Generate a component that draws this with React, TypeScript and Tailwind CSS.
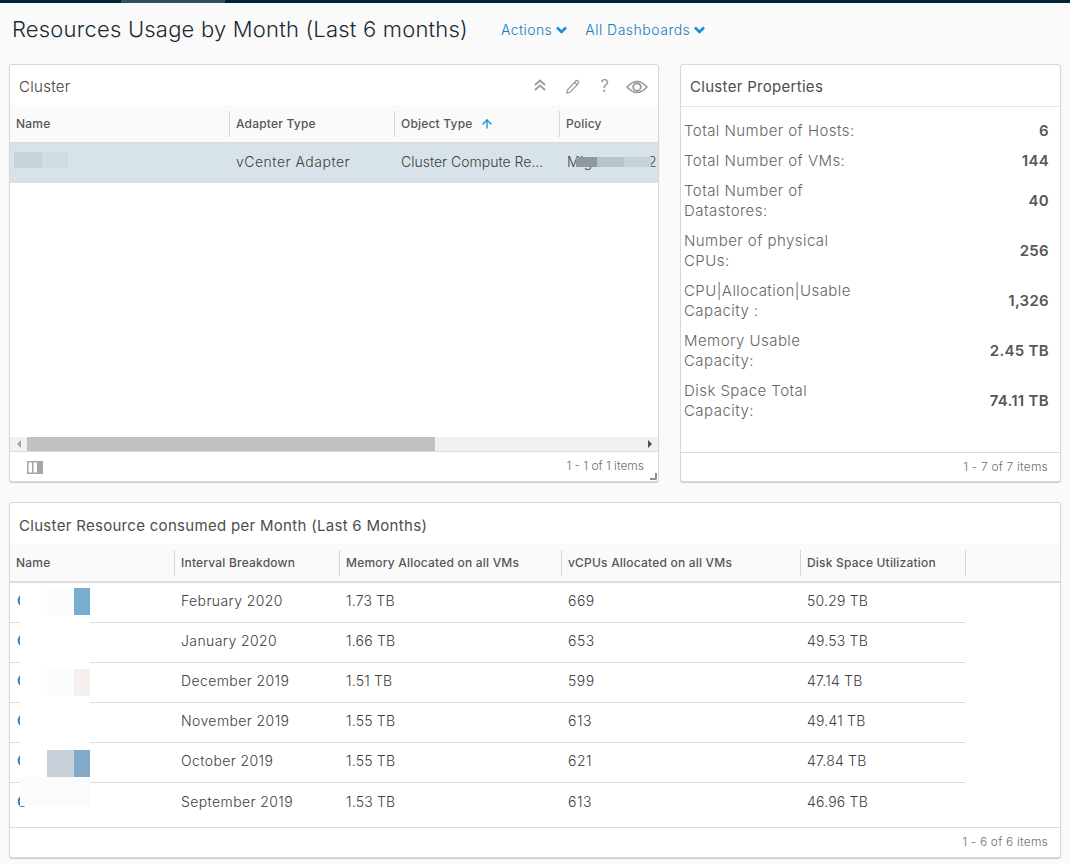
import React from 'react';
import { ArrowUp } from 'lucide-react';

const properties = [
  { label: 'Total Number of Hosts:', value: '6', h: 'h-[30px]' },
  { label: 'Total Number of VMs:', value: '144', h: 'h-[30px]' },
  { label: 'Total Number of Datastores:', value: '40', h: 'h-[50px]' },
  { label: 'Number of physical CPUs:', value: '256', h: 'h-[50px]' },
  { label: 'CPU|Allocation|Usable Capacity :', value: '1,326', h: 'h-[50px]' },
  { label: 'Memory Usable Capacity:', value: '2.45 TB', h: 'h-[50px]' },
  { label: 'Disk Space Total Capacity:', value: '74.11 TB', h: 'h-[50px]' },
];

const months = [
  { month: 'February 2020', mem: '1.73 TB', cpu: '669', disk: '50.29 TB' },
  { month: 'January 2020', mem: '1.66 TB', cpu: '653', disk: '49.53 TB' },
  { month: 'December 2019', mem: '1.51 TB', cpu: '599', disk: '47.14 TB' },
  { month: 'November 2019', mem: '1.55 TB', cpu: '613', disk: '49.41 TB' },
  { month: 'October 2019', mem: '1.55 TB', cpu: '621', disk: '47.84 TB' },
  { month: 'September 2019', mem: '1.53 TB', cpu: '613', disk: '46.96 TB' },
];

function HeadCell({ label, className }: { label: string; className: string }) {
  return (
    <div className={`flex h-[26px] items-center border-r border-[#d7d7d7] pl-[6px] text-[12px] font-medium tracking-[0.2px] text-[#565656] ${className}`}>
      {label}
    </div>
  );
}

function NavChevron() {
  return (
    <svg width="11" height="8" viewBox="0 0 11 8" fill="none" stroke="#1a8fd1" strokeWidth="2.6" className="ml-[4px] mt-[2px]">
      <path d="M1 1.5 L5.5 6 L10 1.5" />
    </svg>
  );
}

export default function App() {
  return (
    <div className='h-[864px] w-[1070px] overflow-hidden bg-[#fafafa] font-["Inter","Liberation_Sans",sans-serif]'>
      {/* Top bar */}
      <div className="flex h-[3px] bg-[#002538]">
        <div className="ml-[121px] w-[104px] bg-[#2f5060]" />
      </div>

      {/* Page title */}
      <div className="flex h-[61px] items-center pb-[9px] pl-[12px]">
        <h1 className="w-[489px] text-[22px] font-light leading-none tracking-[0.2px] text-[#1b2a32]">Resources Usage by Month (Last 6 months)</h1>
        <div className="flex items-center text-[14px] font-light tracking-[0.4px] text-[#0f7fbf]">
          Actions <NavChevron />
        </div>
        <div className="ml-[18px] flex items-center text-[14px] font-light tracking-[0.5px] text-[#0f7fbf]">
          All Dashboards <NavChevron />
        </div>
      </div>

      <div className="ml-[9px] flex w-[1052px] gap-[21px]">
        {/* Cluster card */}
        <div className="relative flex h-[418px] w-[650px] flex-col overflow-hidden rounded-[3px] border border-[#d7d7d7] bg-white shadow-[0_1px_1px_#cfcfcf]">
          <div className="flex h-[40px] flex-none items-center pl-[9px] pr-[10px] pt-[5px]">
            <span className="text-[15px] font-light tracking-[0.3px] text-[#404040]">Cluster</span>
            <div className="ml-auto flex items-center text-[#9a9a9a]">
              <svg width="14" height="14" viewBox="0 0 14 14" fill="none" stroke="currentColor" strokeWidth="1.8" className="mb-[6px]">
                <path d="M2 7 L7 2.5 L12 7" />
                <path d="M2 12 L7 7.5 L12 12" />
              </svg>
              <svg width="16" height="16" viewBox="0 0 16 16" fill="none" stroke="currentColor" strokeWidth="1.3" className="mb-[2px] ml-[18px]">
                <path d="M2 14 L2.8 10.5 L10.5 2.2 Q11.8 1 13 2 Q14.3 3.2 13.2 4.6 L5.5 13 Z" />
                <path d="M9.6 3.4 L12.2 5.8" />
              </svg>
              <span className="mb-[2px] ml-[19px] text-[17px] font-normal leading-none">?</span>
              <svg width="22" height="14" viewBox="0 0 22 14" fill="none" stroke="currentColor" strokeWidth="1.6" className="mb-[2px] ml-[17px]">
                <path d="M1 7 Q11 -4 21 7 Q11 18 1 7 Z" />
                <circle cx="11" cy="7" r="3.8" strokeWidth="1.9" />
              </svg>
            </div>
          </div>

          <div className="flex h-[39px] flex-none items-center border-b-2 border-[#dcdcdc] bg-[#fafafa]">
            <HeadCell label="Name" className="w-[220px]" />
            <HeadCell label="Adapter Type" className="w-[165px]" />
            <div className="flex h-[26px] w-[165px] items-center border-r border-[#d7d7d7] pl-[6px] text-[12px] font-medium tracking-[0.2px] text-[#565656]">
              Object Type
              <ArrowUp size={14} strokeWidth={2.25} className="ml-[7px] text-[#1a8fd1]" />
            </div>
            <div className="pl-[6px] text-[12px] font-medium tracking-[0.2px] text-[#565656]">Policy</div>
          </div>

          <div className="relative flex h-[39px] flex-none items-center bg-[#d8e3e9] pb-[4px] text-[14px] font-light tracking-[0.5px] text-[#404040]">
            <div className="w-[220px]" />
            <div className="w-[165px] pl-[6px]">vCenter Adapter</div>
            <div className="w-[165px] truncate pl-[6px] pr-[4px] tracking-normal">Cluster Compute Re...</div>
            <div className="flex min-w-0 flex-1 justify-between overflow-hidden whitespace-nowrap pl-[7px] pr-[1px]">
              <span>Mig</span>
              <span>2</span>
            </div>
            {/* redacted name */}
            <div className="absolute left-[4px] top-[8px] flex h-[16px]">
              <div className="w-[28px] bg-[#c7d2d9]" />
              <div className="w-[26px] bg-[#d0dce1]" />
            </div>
            {/* redacted policy */}
            <div className="absolute left-[566px] top-[13px] flex h-[10px]">
              <div className="w-[21px] bg-[#8f9a9d]" />
              <div className="w-[27px] bg-[#b9c4c9]" />
              <div className="w-[27px] bg-[#c7d2d8]" />
            </div>
          </div>

          <div className="flex-1" />

          {/* Scrollbar */}
          <div className="flex h-[15px] flex-none items-center border-b border-[#dcdcdc] bg-[#f1f1f1]">
            <div className="flex w-[17px] justify-center">
              <div className="h-0 w-0 border-y-[4px] border-r-[4px] border-y-transparent border-r-[#a3a3a3]" />
            </div>
            <div className="h-[14px] w-[408px] bg-[#c1c1c1]" />
            <div className="ml-auto flex w-[17px] justify-center">
              <div className="h-0 w-0 border-y-[4px] border-l-[4px] border-y-transparent border-l-[#505050]" />
            </div>
          </div>

          {/* Footer */}
          <div className="flex h-[29px] flex-none items-center pl-[17px] pr-[14px]">
            <svg width="16" height="13" viewBox="0 0 16 13" className="mt-[1px]">
              <rect x="0.75" y="0.75" width="14.5" height="11.5" fill="none" stroke="#a6a6a6" strokeWidth="1.5" />
              <rect x="5" y="1" width="1.5" height="11" fill="#a6a6a6" />
              <rect x="10" y="1" width="5" height="11" fill="#a6a6a6" />
            </svg>
            <span className="mb-[1px] ml-auto text-[12px] font-light text-[#6f6f6f]">1 - 1 of 1 items</span>
          </div>

          <div className="absolute bottom-[1px] right-[1px] h-[7px] w-[7px] rounded-br-[2px] border-b-2 border-r-2 border-[#8f8f8f]" />
        </div>

        {/* Properties card */}
        <div className="flex h-[418px] w-[381px] flex-col rounded-[3px] border border-[#d7d7d7] bg-white shadow-[0_1px_1px_#cfcfcf]">
          <div className="flex h-[42px] flex-none items-center border-b border-[#e6e6e6] pl-[9px] pt-[4px] text-[15px] tracking-[0.3px] text-[#4d4d4d]">
            Cluster Properties
          </div>
          <div className="flex-1 pt-[9px]">
            {properties.map((p) => (
              <div key={p.label} className={`flex items-center pl-[3px] pr-[11px] ${p.h}`}>
                <div className="w-[172px] text-[15px] font-light leading-[20px] tracking-[0.45px] text-[#666666]">{p.label}</div>
                <div className="ml-auto text-[15px] font-semibold tracking-[0.3px] text-[#565656]">{p.value}</div>
              </div>
            ))}
          </div>
          <div className="flex h-[29px] flex-none items-center justify-end border-t border-[#dcdcdc] pb-[1px] pr-[12px] text-[12px] font-light tracking-[0.2px] text-[#6f6f6f]">
            1 - 7 of 7 items
          </div>
        </div>
      </div>

      {/* Consumption card */}
      <div className="ml-[9px] mt-[20px] flex h-[356px] w-[1052px] flex-col rounded-[3px] border border-[#d7d7d7] bg-white shadow-[0_1px_1px_#cfcfcf]">
        <div className="flex h-[41px] flex-none items-center pl-[9px] pt-[6px] text-[15px] tracking-[0.3px] text-[#4d4d4d]">
          Cluster Resource consumed per Month (Last 6 Months)
        </div>
        <div className="flex h-[39px] flex-none items-center border-b-2 border-[#dcdcdc] bg-[#fafafa]">
          <HeadCell label="Name" className="w-[165px]" />
          <HeadCell label="Interval Breakdown" className="w-[165px]" />
          <HeadCell label="Memory Allocated on all VMs" className="w-[222px]" />
          <HeadCell label="vCPUs Allocated on all VMs" className="w-[239px]" />
          <HeadCell label="Disk Space Utilization" className="w-[165px]" />
        </div>
        <div className="relative flex-1">
          {months.map((m, i) => (
            <div
              key={m.month}
              className={`flex h-[40px] w-[955px] items-center pb-[4px] text-[14px] font-light tracking-[0.5px] text-[#404040] ${i < months.length - 1 ? 'border-b border-[#dcdcdc]' : ''}`}
            >
              <div className="w-[165px] pl-[7px] font-semibold text-[#0f7fbf]">C</div>
              <div className="w-[165px] pl-[6px] tracking-[0.4px]">{m.month}</div>
              <div className="w-[222px] pl-[6px] tracking-[0.2px]">{m.mem}</div>
              <div className="w-[239px] pl-[6px]">{m.cpu}</div>
              <div className="w-[164px] pl-[6px] tracking-[0.2px]">{m.disk}</div>
            </div>
          ))}
          {/* redacted names */}
          <div className="absolute left-[10px] top-0 h-[194px] w-[70px] bg-white" />
          <div className="absolute left-[37px] top-[5px] h-[27px] w-[27px] bg-[#fbfcfd]" />
          <div className="absolute left-[64px] top-[5px] h-[27px] w-[16px] bg-[#76aecf]" />
          <div className="absolute left-[37px] top-[86px] h-[27px] w-[27px] bg-[#fdfcfc]" />
          <div className="absolute left-[64px] top-[86px] h-[27px] w-[16px] bg-[#f5f0ee]" />
          <div className="absolute left-[37px] top-[167px] h-[27px] w-[27px] bg-[#c8d0da]" />
          <div className="absolute left-[64px] top-[167px] h-[27px] w-[16px] bg-[#85a9c8]" />
          <div className="absolute left-[10px] top-[194px] h-[29px] w-[70px] bg-[#fbfbfb]" />
        </div>
        <div className="flex h-[30px] flex-none items-center justify-end border-t border-[#dcdcdc] pb-[1px] pr-[12px] text-[12px] font-light tracking-[0.2px] text-[#6f6f6f]">
          1 - 6 of 6 items
        </div>
      </div>
    </div>
  );
}
